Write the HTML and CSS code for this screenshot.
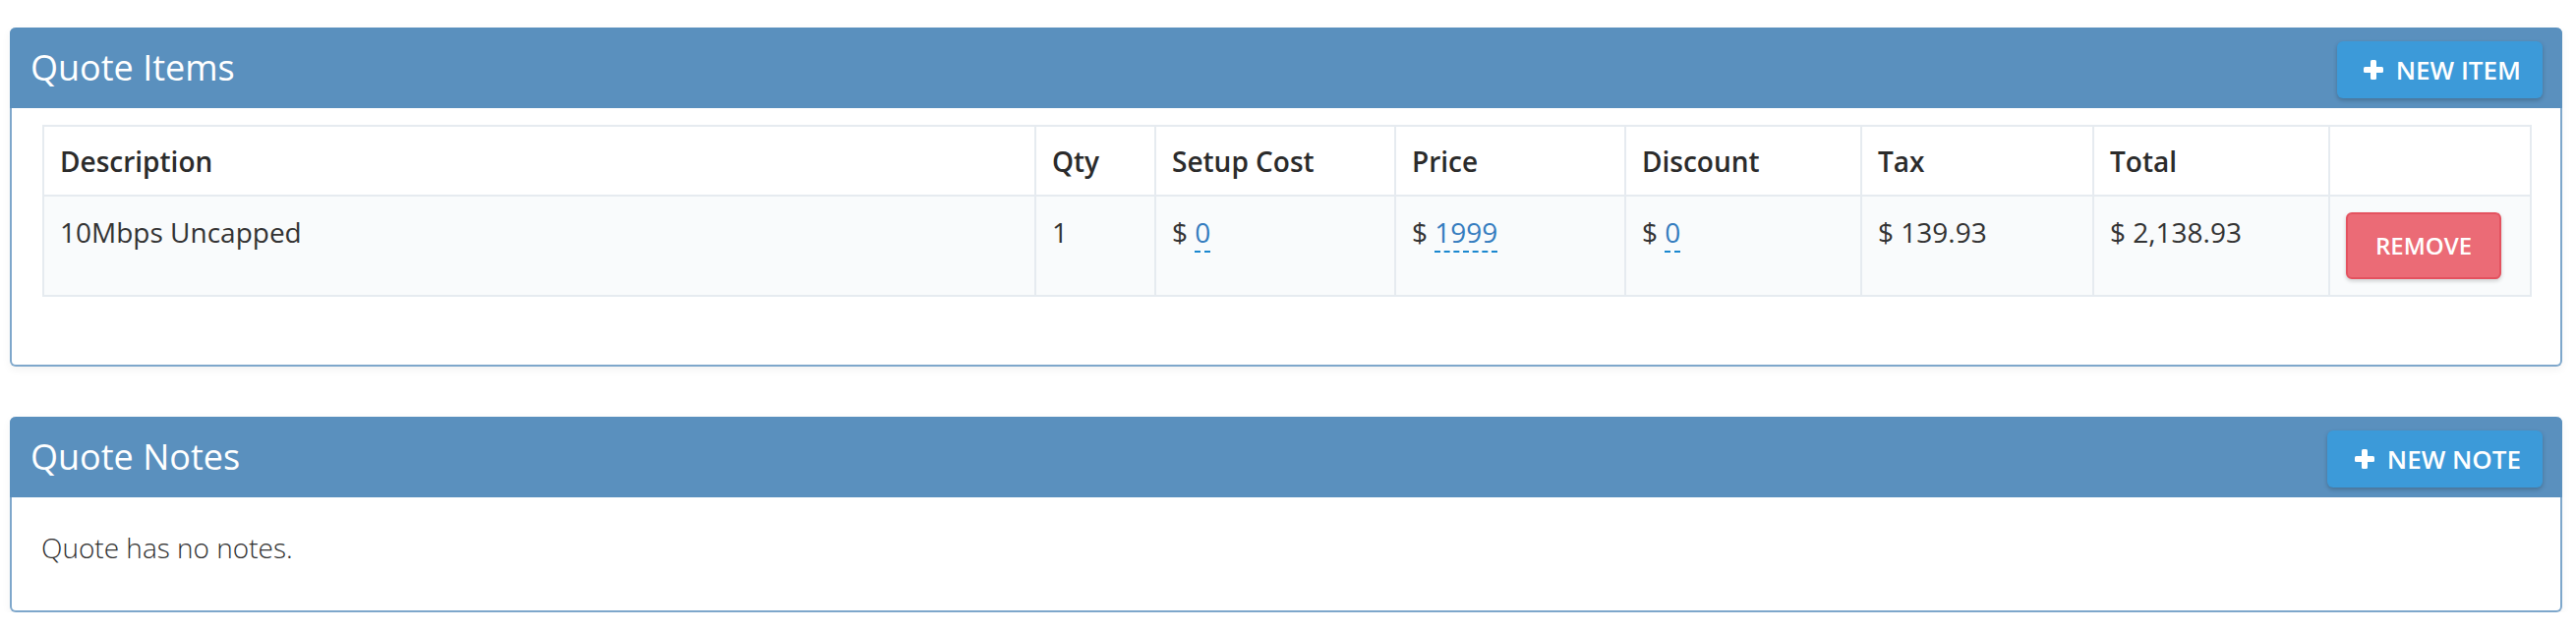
FILE: index.html
```html
<!DOCTYPE html>
<html lang="en">
<head>
<meta charset="utf-8">
<title>Quote</title>
<link rel="stylesheet" href="styles.css">
</head>
<body>
<div class="page">
  <section class="panel panel--items">
    <header class="panel-head">
      <h3 class="panel-title">Quote Items</h3>
      <button class="btn btn-new btn-new--item" type="button">
        <svg class="icon-plus" viewBox="0 0 20 20" width="20" height="20" aria-hidden="true"><rect x="0" y="7" width="20" height="6" rx="1.5"/><rect x="7" y="0" width="6" height="20" rx="1.5"/></svg>
        <span>New Item</span>
      </button>
    </header>
    <div class="panel-body panel-body--table">
      <table class="items">
        <colgroup>
          <col class="c-desc"><col class="c-qty"><col class="c-setup"><col class="c-price"><col class="c-disc"><col class="c-tax"><col class="c-total"><col class="c-act">
        </colgroup>
        <thead>
          <tr>
            <th>Description</th><th>Qty</th><th>Setup Cost</th><th>Price</th><th>Discount</th><th>Tax</th><th>Total</th><th></th>
          </tr>
        </thead>
        <tbody>
          <tr>
            <td>10Mbps Uncapped</td>
            <td>1</td>
            <td>$ <a class="editable">0</a></td>
            <td>$ <a class="editable">1999</a></td>
            <td>$ <a class="editable">0</a></td>
            <td>$ 139.93</td>
            <td>$ 2,138.93</td>
            <td><button class="btn btn-remove" type="button">Remove</button></td>
          </tr>
        </tbody>
      </table>
    </div>
  </section>

  <section class="panel panel--notes">
    <header class="panel-head">
      <h3 class="panel-title">Quote Notes</h3>
      <button class="btn btn-new btn-new--note" type="button">
        <svg class="icon-plus" viewBox="0 0 20 20" width="20" height="20" aria-hidden="true"><rect x="0" y="7" width="20" height="6" rx="1.5"/><rect x="7" y="0" width="6" height="20" rx="1.5"/></svg>
        <span>New Note</span>
      </button>
    </header>
    <div class="panel-body panel-body--notes">
      <p class="empty">Quote has no notes.</p>
    </div>
  </section>
</div>
</body>
</html>
```

FILE: styles.css
```css
* { box-sizing: border-box; }

html, body {
  margin: 0;
  padding: 0;
  background: #ffffff;
}

body {
  font-family: "Open Sans", "Noto Sans", "Liberation Sans", sans-serif;
  font-size: 28px;
  line-height: 40px;
  color: #333333;
}

.page {
  padding: 28px 14px 0 10px;
  display: flex;
  flex-direction: column;
  gap: 51px;
}

.panel {
  border: 2px solid #7ea7cb;
  border-top: 0;
  border-radius: 6px;
  background: #ffffff;
  box-shadow: 0 3px 10px rgba(0, 0, 0, 0.05);
}

.panel-head {
  display: flex;
  align-items: center;
  justify-content: space-between;
  height: 82px;
  margin: 0 -2px;
  padding: 0 20px 0 21px;
  background: #5a90be;
  border-radius: 6px 6px 0 0;
}

.panel-title {
  margin: 0;
  font-size: 36px;
  font-weight: 400;
  line-height: 40px;
  color: #ffffff;
}

.btn {
  font-family: inherit;
  cursor: pointer;
  text-transform: uppercase;
  color: #ffffff;
}

.btn-new {
  display: inline-flex;
  align-items: center;
  gap: 13px;
  height: 58px;
  margin-top: 4px;
  padding: 0 22px 0 27px;
  border: 0;
  border-radius: 6px;
  background: #3c9ad9;
  box-shadow: 0 2px 4px rgba(0, 0, 0, 0.22);
  font-size: 26px;
  font-weight: 600;
  line-height: 1;
}

.btn-new--note {
  padding-left: 28px;
}

.icon-plus {
  display: block;
  fill: #ffffff;
  flex: none;
}

.panel-body--table {
  padding: 17px 31px 69px;
}

.panel-body--notes {
  padding: 31px 30px 44px;
}

.empty {
  margin: 0;
  font-weight: 300;
  color: #2f2f2f;
}

.items {
  width: 100%;
  table-layout: fixed;
  border-collapse: collapse;
}

.c-desc { width: 1009px; }
.c-qty { width: 122px; }
.c-setup { width: 244px; }
.c-price { width: 234px; }
.c-disc { width: 240px; }
.c-tax { width: 236px; }
.c-total { width: 240px; }
.c-act { width: 205px; }

.items th,
.items td {
  border: 2px solid #e6ebf0;
  text-align: left;
  vertical-align: top;
}

.items th {
  padding: 15px 16px 14px;
  font-weight: 600;
  color: #2b2b2b;
  background: #ffffff;
}

.items td {
  padding: 16px;
  background: #f9fbfc;
}

.editable {
  color: #357dbf;
  text-decoration: none;
  border-bottom: 2px dashed #1a87cf;
}

.btn-remove {
  display: inline-flex;
  align-items: center;
  justify-content: center;
  width: 158px;
  height: 68px;
  padding: 0;
  border: 2px solid #e4525f;
  border-radius: 6px;
  background: #eb6b76;
  box-shadow: 0 2px 4px rgba(0, 0, 0, 0.18);
  font-size: 24px;
  font-weight: 600;
  line-height: 1;
  vertical-align: top;
}
```
